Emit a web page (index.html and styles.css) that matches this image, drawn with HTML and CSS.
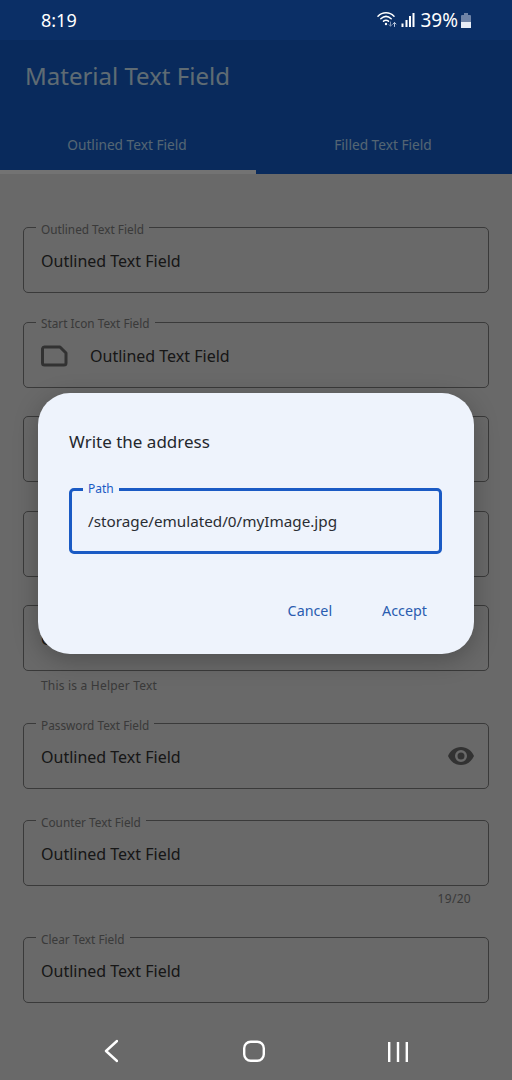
FILE: index.html
```html
<!DOCTYPE html>
<html lang="en">
<head>
  <meta charset="UTF-8" />
  <meta name="viewport" content="width=device-width, initial-scale=1.0"/>
  <title>Material Text Field</title>
  <link rel="stylesheet" href="styles.css">
</head>
<body>
  <div class="status-bar">
    <span class="clock">8:19</span>
    <div class="status-icons">
      <svg class="wifi" width="20" height="18" viewBox="0 0 20 18" fill="none" stroke="#fff" stroke-linecap="round">
        <path d="M1 6.2C5.5 1.6 12.5 1.6 17 6.2" stroke-width="1.5"/>
        <path d="M3.8 8.8C7 5.8 11 5.8 14.2 8.8" stroke-width="1.5"/>
        <path d="M6.5 11.2C8 10 10 10 11.5 11.2" stroke-width="1.5"/>
        <circle cx="9" cy="14" r="1.2" fill="#fff" stroke="none"/>
        <path d="M13.5 12v4M12 14.6l1.5 1.6 1.5-1.6" stroke="#7f93b5" stroke-width="1"/>
        <path d="M17.5 16.5v-4M16 14l1.5-1.6 1.5 1.6" stroke="#b9c6dc" stroke-width="1"/>
      </svg>
      <svg class="signal" width="14" height="16" viewBox="0 0 14 16" fill="#fff">
        <rect x="0.5" y="11.5" width="2" height="3.5"/>
        <rect x="4.5" y="8" width="2" height="7"/>
        <rect x="8" y="4" width="2" height="11"/>
        <rect x="11.5" y="1" width="2" height="14"/>
      </svg>
      <span class="battery-text">39%</span>
      <div class="battery"><div class="battery-level"></div></div>
    </div>
  </div>

  <div class="app">
    <header class="toolbar">
      <h1>Material Text Field</h1>
      <div class="tabs">
        <div class="tab tab-active">Outlined Text Field</div>
        <div class="tab">Filled Text Field</div>
      </div>
    </header>

    <main class="form">
      <div class="block">
        <div class="field">
          <label>Outlined Text Field</label>
          <span class="value">Outlined Text Field</span>
        </div>
      </div>
      <div class="block">
        <div class="field">
          <label>Start Icon Text Field</label>
          <svg class="start-icon" width="28" height="22" viewBox="0 0 28 22" fill="none" stroke="#707070" stroke-width="3" stroke-linejoin="round">
            <path d="M3.500 2H19l6 6V18a2 2 0 0 1-2 2H3.500a2 2 0 0 1-2-2V3.500a2 2 0 0 1 2-1.500z"/>
          </svg>
          <span class="value">Outlined Text Field</span>
        </div>
      </div>
      <!-- these two sit fully behind the dialog -->
      <div class="block"><div class="field"></div></div>
      <div class="block"><div class="field"></div></div>
      <div class="block block-helper">
        <div class="field">
          <span class="value">Outlined Text Field</span>
        </div>
        <div class="helper">This is a Helper Text</div>
      </div>
      <div class="block block-password">
        <div class="field">
          <label>Password Text Field</label>
          <span class="value">Outlined Text Field</span>
          <svg class="eye" width="28" height="20" viewBox="0 0 28 20">
            <path fill="#707070" fill-rule="evenodd" d="M14 1C8 1 3.300 4.600 1 10c2.300 5.400 7 9 13 9s10.700-3.600 13-9c-2.300-5.400-7-9-13-9zm0 15a6 6 0 1 1 0-12 6 6 0 0 1 0 12zm0-9.500a3.500 3.500 0 1 0 0 7 3.500 3.500 0 0 0 0-7z"/>
          </svg>
        </div>
      </div>
      <div class="block block-counter">
        <div class="field">
          <label>Counter Text Field</label>
          <span class="value">Outlined Text Field</span>
        </div>
        <div class="counter">19/20</div>
      </div>
      <div class="block">
        <div class="field">
          <label>Clear Text Field</label>
          <span class="value">Outlined Text Field</span>
        </div>
      </div>
    </main>
  </div>

  <div class="scrim">
    <div class="dialog">
      <h2>Write the address</h2>
      <div class="path-field">
        <label>Path</label>
        <span class="path-value">/storage/emulated/0/myImage.jpg</span>
      </div>
      <div class="dialog-actions">
        <button class="text-button">Cancel</button>
        <button class="text-button">Accept</button>
      </div>
    </div>
  </div>

  <nav class="nav-bar">
    <svg width="16" height="24" viewBox="0 0 16 24" fill="none" stroke="#fff" stroke-width="2.400" stroke-linecap="round" stroke-linejoin="round">
      <path d="M15 2 4 12 15 22"/>
    </svg>
    <svg class="nav-home" width="24" height="24" viewBox="0 0 24 24" fill="none" stroke="#fff" stroke-width="2.400">
      <rect x="2.200" y="2.800" width="19.600" height="19" rx="6.500"/>
    </svg>
    <svg class="nav-recents" width="22" height="24" viewBox="0 0 22 24" fill="#fff">
      <rect x="1" y="3" width="2.400" height="20"/>
      <rect x="9.800" y="3" width="2.400" height="20"/>
      <rect x="18.600" y="3" width="2.400" height="20"/>
    </svg>
  </nav>
</body>
</html>
```

FILE: styles.css
```css
* {
  box-sizing: border-box;
}
body {
  margin: 0;
  width: 512px;
  height: 1080px;
  overflow: hidden;
  position: relative;
  font-family: "Noto Sans", Arial, sans-serif;
  background: #e8e8e8;
}
.status-bar {
  position: relative;
  z-index: 3;
  height: 40px;
  background: #0b2f66;
  color: #fff;
  display: flex;
  justify-content: space-between;
  align-items: center;
  padding: 0 41px;
}
.clock {
  font-size: 18px;
}
.status-icons {
  display: flex;
  align-items: center;
}
.wifi {
  margin-top: -3px;
}
.signal {
  margin-left: 4px;
}
.battery-text {
  font-size: 19px;
  margin-left: 5px;
}
.battery {
  position: relative;
  width: 10px;
  height: 13px;
  margin: 2px 0 0 3px;
  background: #6f83a6;
  border-radius: 1px;
  display: flex;
  align-items: flex-end;
}
.battery::before {
  content: "";
  position: absolute;
  left: 3px;
  top: -2px;
  width: 4px;
  height: 2px;
  background: #6f83a6;
}
.battery-level {
  width: 100%;
  height: 6px;
  background: #e8edf6;
}
.toolbar {
  background: #165dcc;
  height: 134px;
  display: flex;
  flex-direction: column;
  justify-content: space-between;
}
.toolbar h1 {
  margin: 0;
  padding: 19px 25px 0;
  font-size: 24px;
  font-weight: 400;
  line-height: 34px;
  color: #d3eeff;
}
.tabs {
  display: flex;
}
.tab {
  flex: 1;
  height: 57px;
  padding: 17px 2px 0 0;
  text-align: center;
  font-size: 13.700px;
  line-height: 22px;
  color: #bce0ff;
}
.tab-active {
  border-bottom: 4px solid #fff;
}
.form {
  padding: 53px 23px 0;
}
.block {
  margin-bottom: 28.500px;
}
.block-helper {
  margin-bottom: 0;
}
.block-password {
  margin-bottom: 31px;
}
.block-counter {
  margin-bottom: 0;
}
.field {
  position: relative;
  height: 66px;
  border: 1px solid #808080;
  border-radius: 5px;
  display: flex;
  align-items: center;
  padding: 2px 15px 0 17px;
}
.field label {
  position: absolute;
  left: 12px;
  top: -7.500px;
  padding: 0 5px;
  background: #e8e8e8;
  font-size: 11.800px;
  line-height: 16px;
  color: #808080;
}
.value {
  font-size: 16px;
  color: #333;
}
.start-icon {
  margin-right: 21px;
}
.eye {
  margin: -2px -1.500px 0 auto;
}
.helper {
  padding: 7px 18px 0;
  font-size: 12px;
  line-height: 16px;
  letter-spacing: 0.2px;
  height: 52px;
  color: #808080;
}
.counter {
  padding: 5px 18px 0;
  height: 51px;
  text-align: right;
  font-size: 12px;
  line-height: 16px;
  letter-spacing: 0.3px;
  color: #808080;
}
.scrim {
  position: absolute;
  inset: 0;
  z-index: 1;
  background: rgba(0, 0, 0, 0.55);
  padding: 393px 38px 0;
}
.dialog {
  height: 261px;
  background: #eef3fc;
  border-radius: 32px;
  padding: 36px 32px 0 31px;
  box-shadow: 0 6px 24px rgba(0, 0, 0, 0.25);
}
.dialog h2 {
  margin: 0 0 33px;
  font-size: 17px;
  font-weight: 400;
  line-height: 26px;
  color: #24272c;
}
.path-field {
  position: relative;
  height: 66px;
  border: 3px solid #1a5ac4;
  border-radius: 5px;
  display: flex;
  align-items: center;
  padding-left: 16px;
}
.path-field label {
  position: absolute;
  left: 11px;
  top: -10px;
  padding: 0 5px;
  background: #eef3fc;
  font-size: 12px;
  line-height: 16px;
  color: #1a5ac4;
}
.path-value {
  font-size: 15.250px;
  color: #2a2d33;
}
.dialog-actions {
  display: flex;
  justify-content: flex-end;
  gap: 50px;
  margin-top: 46px;
  padding-right: 15px;
}
.text-button {
  border: none;
  background: none;
  padding: 0;
  font: inherit;
  font-size: 14.300px;
  line-height: 22px;
  color: #2a5cb0;
}
.nav-bar {
  position: absolute;
  left: 0;
  right: 0;
  bottom: 17px;
  z-index: 2;
  height: 24px;
  display: flex;
  align-items: center;
  padding-left: 102px;
}
.nav-home {
  margin-left: 124px;
}
.nav-recents {
  margin-left: 121px;
}
```
